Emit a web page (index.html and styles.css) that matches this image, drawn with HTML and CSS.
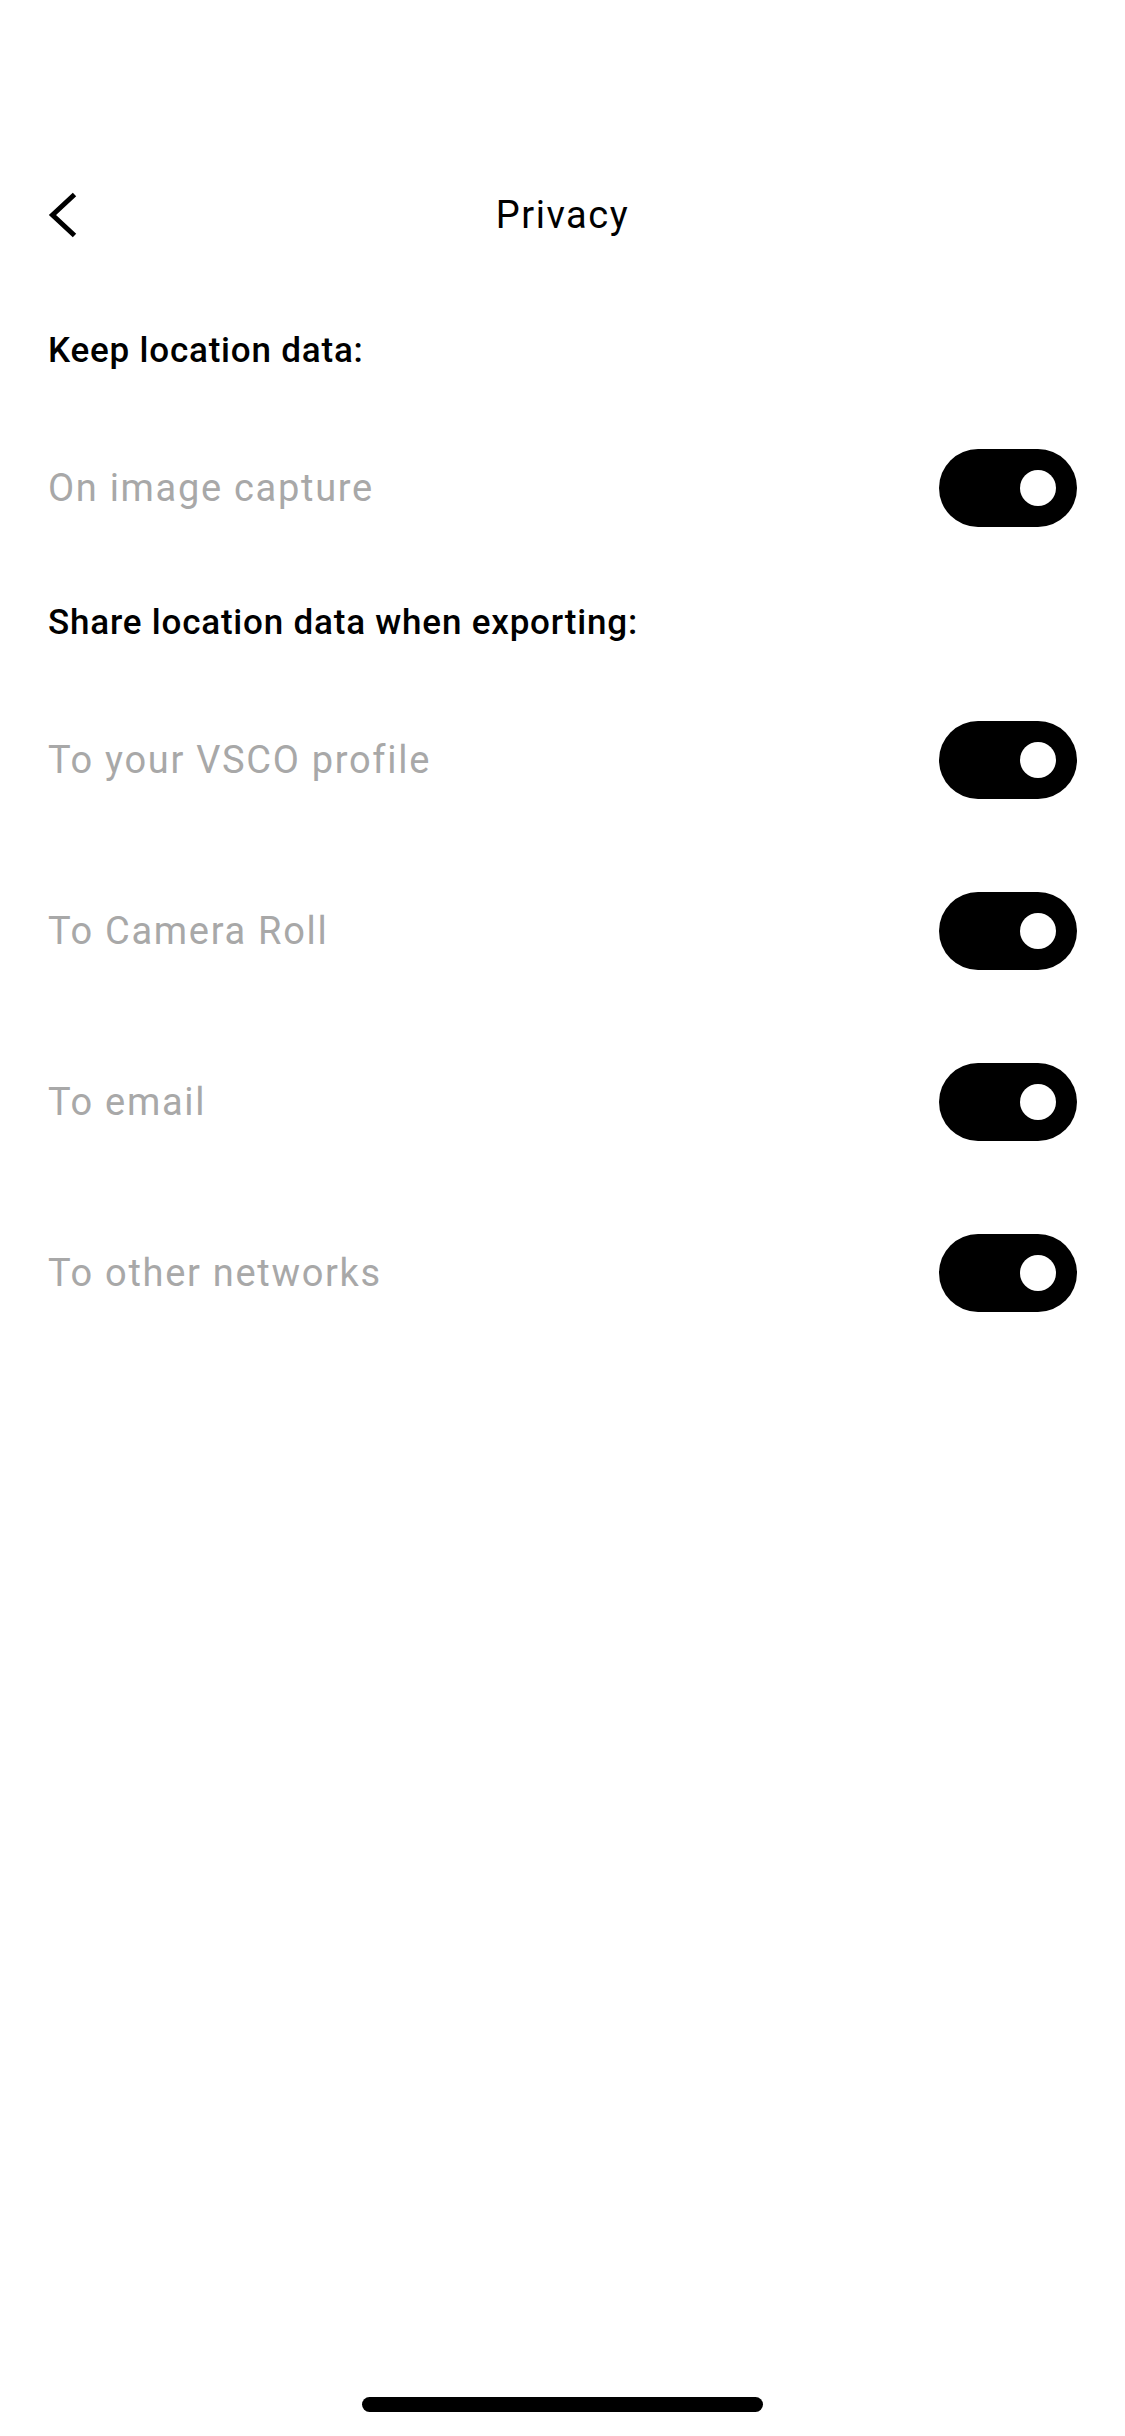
FILE: index.html
```html
<!DOCTYPE html>
<html lang="en">
<head>
    <meta charset="UTF-8">
    <meta name="viewport" content="width=device-width, initial-scale=1.0">
    <title>Privacy</title>
    <link rel="stylesheet" href="styles.css">
</head>
<body>
    <div class="screen">
        <!-- Top bar -->
        <div class="nav">
            <button class="back" aria-label="Back">
                <svg width="30" height="48" viewBox="0 0 30 48">
                    <path d="M26.5 3.5 L4.5 24 L26.5 44.5" fill="none" stroke="#000" stroke-width="5" stroke-linecap="butt" stroke-linejoin="miter"/>
                </svg>
            </button>
            <h1 class="title">Privacy</h1>
            <span></span>
        </div>

        <!-- Keep location -->
        <div class="group">
            <h2 class="group-title">Keep location data:</h2>
            <div class="row">
                <span class="label">On image capture</span>
                <span class="toggle on"><span class="knob"></span></span>
            </div>
        </div>

        <!-- Share location -->
        <div class="group">
            <h2 class="group-title">Share location data when exporting:</h2>
            <div class="row">
                <span class="label">To your VSCO profile</span>
                <span class="toggle on"><span class="knob"></span></span>
            </div>
            <div class="row">
                <span class="label">To Camera Roll</span>
                <span class="toggle on"><span class="knob"></span></span>
            </div>
            <div class="row">
                <span class="label">To email</span>
                <span class="toggle on"><span class="knob"></span></span>
            </div>
            <div class="row">
                <span class="label">To other networks</span>
                <span class="toggle on"><span class="knob"></span></span>
            </div>
        </div>

        <div class="home-indicator"></div>
    </div>
</body>
</html>
```

FILE: styles.css
```css
* { margin: 0; padding: 0; box-sizing: border-box; }
html, body { background: #fff; }
body { font-family: Roboto, 'Liberation Sans', sans-serif; color: #000; overflow: hidden; }

.screen { width: 1125px; height: 2436px; display: flex; flex-direction: column; }

.nav { margin-top: 170px; height: 90px; padding: 0 48px; display: grid; grid-template-columns: 1fr auto 1fr; align-items: center; }
.back { background: none; border: none; width: 30px; height: 48px; display: flex; cursor: pointer; }
.title { font-size: 38px; font-weight: 400; letter-spacing: 1.5px; line-height: 46px; }

.group { display: flex; flex-direction: column; padding: 0 48px; }
.group + .group { margin-top: 73px; }
.nav + .group { margin-top: 68px; }
.group-title { font-size: 35px; font-weight: 500; line-height: 46px; margin-bottom: 75px; letter-spacing: 0.8px; }

.row { height: 78px; display: flex; align-items: center; justify-content: space-between; }
.row + .row { margin-top: 93px; }
.label { font-size: 38px; color: #a8a8a8; letter-spacing: 1.7px; }

.toggle { width: 138px; height: 78px; border-radius: 39px; background: #000; display: flex; align-items: center; padding: 0 21px; }
.toggle.on { justify-content: flex-end; }
.knob { width: 36px; height: 36px; border-radius: 50%; background: #fff; }

.home-indicator { margin: auto auto 24px; width: 401px; height: 15px; border-radius: 8px; background: #000; }
```
